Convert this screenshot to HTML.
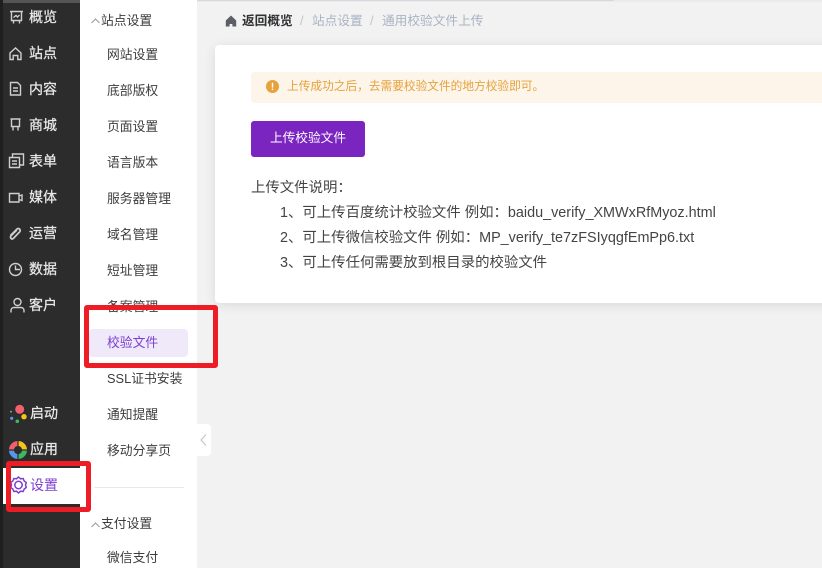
<!DOCTYPE html>
<html lang="zh">
<head>
<meta charset="utf-8">
<style>
html,body{margin:0;padding:0;width:822px;height:568px;overflow:hidden;background:#f2f2f2;font-family:"Liberation Sans","Noto Sans CJK SC",sans-serif;}
.a{position:absolute;white-space:nowrap;}
.side{position:absolute;left:0;top:0;width:80px;height:568px;background:#2c2c2c;}
.strip{position:absolute;left:0;top:0;width:3px;height:568px;background:#1f1f1f;}
.m{position:absolute;left:29px;font-size:14px;line-height:20px;color:#e8e8e8;font-weight:normal;white-space:nowrap;-webkit-text-stroke:.25px #e8e8e8;}
.ic{position:absolute;width:17px;height:17px;fill:none;stroke:#cfcfcf;stroke-width:1.4;}
.sub{position:absolute;left:80px;top:0;width:117px;height:568px;background:#fff;}
.s{position:absolute;left:107px;font-size:12.8px;line-height:20px;color:#3c3c3c;white-space:nowrap;}
.h{position:absolute;left:101px;font-size:12.8px;line-height:20px;color:#3c3c3c;white-space:nowrap;}
.l{position:absolute;font-size:14.4px;line-height:20px;color:#444;white-space:nowrap;}
.b{position:absolute;font-size:12.7px;line-height:20px;white-space:nowrap;}
</style>
</head>
<body>
<div class="a" style="left:0;top:0;width:822px;height:2px;background:#ebebef;"></div>
<div class="a" style="left:197px;top:0;width:417px;height:1px;background:#d8d8d8;"></div>

<div class="side"></div>
<div class="a" style="left:3px;top:0;width:77px;height:3px;background:#555;"></div>
<div class="strip"></div>

<svg class="ic" style="left:8px;top:9px" viewBox="0 0 17 17"><path d="M2 2.500h13M3.500 2.500v9h10v-9M5.500 11.500v3M11.500 11.500v3M5.500 8.500l2.500-2 1.500 1.500 2-2"/></svg>
<div class="m" style="top:7px">概览</div>
<svg class="ic" style="left:7px;top:45px" viewBox="0 0 17 17"><path d="M3 8l5.500-5 5.500 5v6.500h-3.200v-4h-4.600v4h-3.200z"/></svg>
<div class="m" style="top:43px">站点</div>
<svg class="ic" style="left:7px;top:80px" viewBox="0 0 17 17"><path d="M3.500 2.500h7l3 3v9.500h-10zM6 8h5M6 11h5"/></svg>
<div class="m" style="top:79px">内容</div>
<svg class="ic" style="left:7px;top:116px" viewBox="0 0 17 17"><path d="M3.500 3h10M4.500 3v7.500h8v-7.500M6 10.500v4M11 10.500v4"/></svg>
<div class="m" style="top:115px">商城</div>
<svg class="ic" style="left:7.500px;top:152px" viewBox="0 0 17 17"><path d="M1.500 5.500h10v10h-10zM4.500 5.500v-3.500h11v11h-4M4 9h5M4 12h5"/></svg>
<div class="m" style="top:151px">表单</div>
<svg class="ic" style="left:7px;top:189px" viewBox="0 0 17 17"><path d="M2.500 4.500h9.500v8.500h-9.500zM12 7l3-1v5.500l-3-1"/></svg>
<div class="m" style="top:187px">媒体</div>
<svg class="ic" style="left:7px;top:225px;stroke-width:1.700" viewBox="0 0 17 17"><path d="M3.500 10.500l6.500-6.500c2-1.500 4 .8 2.800 2.700l-6.500 6.800c-1.500 1.200-3.500-.5-2.500-2.500l6-6"/></svg>
<div class="m" style="top:223px">运营</div>
<svg class="ic" style="left:7px;top:261px" viewBox="0 0 17 17"><circle cx="8.500" cy="8.500" r="6"/><path d="M8.500 4.500v4h4.500"/></svg>
<div class="m" style="top:259px">数据</div>
<svg class="ic" style="left:9px;top:297px" viewBox="0 0 17 17"><circle cx="8.500" cy="5" r="3.500"/><path d="M2 15.500v-2c0-2 1.500-3 3-3h7c1.500 0 3 1 3 3v2"/></svg>
<div class="m" style="top:295px">客户</div>

<svg class="a" style="left:8px;top:403px;width:20px;height:20px" viewBox="0 0 20 20">
<circle cx="11.700" cy="6.300" r="4.500" fill="#f0616d"/><circle cx="16" cy="13.700" r="2.700" fill="#f8c31c"/><circle cx="9.300" cy="18.300" r="1.800" fill="#3cb95a"/><circle cx="3.700" cy="15.300" r="1.600" fill="#5a96e8"/><circle cx="3" cy="8.700" r=".9" fill="#5fc1d8"/>
</svg>
<div class="m" style="top:403px;left:30px">启动</div>
<svg class="a" style="left:8.500px;top:441px;width:18px;height:18px" viewBox="0 0 18 18">
<path d="M9.600 0a9 9 0 0 1 8.400 8.400h-5a4.200 4.200 0 0 0-3.400-3.400z" fill="#f8c31c"/><path d="M18 9.600a9 9 0 0 1-8.400 8.400v-5a4.200 4.200 0 0 0 3.400-3.400z" fill="#3cb95a"/><path d="M8.400 18a9 9 0 0 1-8.400-8.400h5a4.200 4.200 0 0 0 3.400 3.400z" fill="#5a96e8"/><path d="M0 8.400a9 9 0 0 1 8.400-8.400v5a4.200 4.200 0 0 0-3.400 3.400z" fill="#f0616d"/>
</svg>
<div class="m" style="top:439px;left:30px">应用</div>

<div class="a" style="left:3px;top:468px;width:77px;height:36px;background:#fff;"></div>
<svg class="a" style="left:10px;top:476px;width:17px;height:18px;fill:none;stroke:#7b3fd0;stroke-width:1.500" viewBox="0 0 17 18"><path d="M8.500 1l2 1.800 2.700-.3 1 2.500 2.100 1.500-.8 2.500.8 2.500-2.100 1.500-1 2.500-2.700-.3-2 1.800-2-1.800-2.700.3-1-2.500L.7 11.500l.8-2.500-.8-2.500L2.800 5l1-2.500 2.700.3z"/><circle cx="8.500" cy="9" r="3.700"/></svg>
<div class="m" style="top:475px;left:30px;color:#7b3fd0;-webkit-text-stroke:0;">设置</div>

<div class="sub"></div>
<svg class="a" style="left:90px;top:17px;width:11px;height:8px;fill:none;stroke:#999;stroke-width:1" viewBox="0 0 11 8"><path d="M1.500 6l4-4 4 4"/></svg>
<div class="h" style="top:11px">站点设置</div>
<div class="s" style="top:45px">网站设置</div>
<div class="s" style="top:81px">底部版权</div>
<div class="s" style="top:117px">页面设置</div>
<div class="s" style="top:153px">语言版本</div>
<div class="s" style="top:189px">服务器管理</div>
<div class="s" style="top:225px">域名管理</div>
<div class="s" style="top:261px">短址管理</div>
<div class="s" style="top:297px">备案管理</div>
<div class="a" style="left:89px;top:329px;width:99px;height:28px;border-radius:4px;background:#f0e9f9;"></div>
<div class="s" style="top:333px;color:#7b3fd0">校验文件</div>
<div class="s" style="top:369px">SSL证书安装</div>
<div class="s" style="top:405px">通知提醒</div>
<div class="s" style="top:441px">移动分享页</div>
<div class="a" style="left:94px;top:487px;width:90px;height:1px;background:#e8e8ef;"></div>
<svg class="a" style="left:90px;top:521px;width:11px;height:8px;fill:none;stroke:#999;stroke-width:1" viewBox="0 0 11 8"><path d="M1.500 6l4-4 4 4"/></svg>
<div class="h" style="top:514px">支付设置</div>
<div class="s" style="top:548px">微信支付</div>

<div class="a" style="left:197px;top:424px;width:14px;height:32px;background:#fff;border-radius:0 4px 4px 0;"></div>
<svg class="a" style="left:199px;top:433px;width:9px;height:14px;fill:none;stroke:#c4c8d0;stroke-width:1.200" viewBox="0 0 9 14"><path d="M7 1.500L2 7l5 5.500"/></svg>

<svg class="a" style="left:225px;top:15px;width:12px;height:12px" viewBox="0 0 12 12"><path d="M6 .5L.8 5.500V11.500h3.800V9h2.800v2.500h3.800V5.500z" fill="#5c5f66"/></svg>
<div class="b" style="left:242px;top:11px;font-weight:bold;color:#303133;">返回概览</div>
<div class="b" style="left:300px;top:11px;color:#c0c4cc;">/</div>
<div class="b" style="left:312px;top:11px;color:#a9b3c4;">站点设置</div>
<div class="b" style="left:370px;top:11px;color:#c0c4cc;">/</div>
<div class="b" style="left:382px;top:11px;color:#a9b3c4;">通用校验文件上传</div>

<div class="a" style="left:215px;top:45px;width:640px;height:258px;background:#fff;border-radius:4px;box-shadow:0 2px 12px rgba(0,0,0,.1);"></div>
<div class="a" style="left:251px;top:72px;width:600px;height:31px;background:#fdf4ea;border-radius:4px;"></div>
<svg class="a" style="left:266px;top:80px;width:13px;height:13px" viewBox="0 0 13 13"><circle cx="6.500" cy="6.500" r="6.500" fill="#e6a23c"/><rect x="5.800" y="2.800" width="1.400" height="4.800" fill="#fff"/><rect x="5.800" y="8.500" width="1.400" height="1.500" fill="#fff"/></svg>
<div class="a" style="left:287px;top:77px;font-size:11.700px;line-height:20px;color:#e6a23c;">上传成功之后，去需要校验文件的地方校验即可。</div>
<div class="a" style="left:251px;top:121px;width:114px;height:36px;background:#7b25c1;border-radius:3px;color:#fff;font-size:12.700px;line-height:35px;text-align:center;">上传校验文件</div>

<div class="l" style="left:251px;top:178px;">上传文件说明：</div>
<div class="l" style="left:280px;top:203px;">1、可上传百度统计校验文件 例如：baidu_verify_XMWxRfMyoz.html</div>
<div class="l" style="left:280px;top:228px;">2、可上传微信校验文件 例如：MP_verify_te7zFSIyqgfEmPp6.txt</div>
<div class="l" style="left:280px;top:253px;">3、可上传任何需要放到根目录的校验文件</div>

<div class="a" style="left:84px;top:305px;width:124px;height:53px;border:5px solid #ee1c25;border-radius:3px;"></div>
<div class="a" style="left:6px;top:461px;width:75px;height:41px;border:5px solid #ee1c25;border-radius:3px;"></div>
</body>
</html>
